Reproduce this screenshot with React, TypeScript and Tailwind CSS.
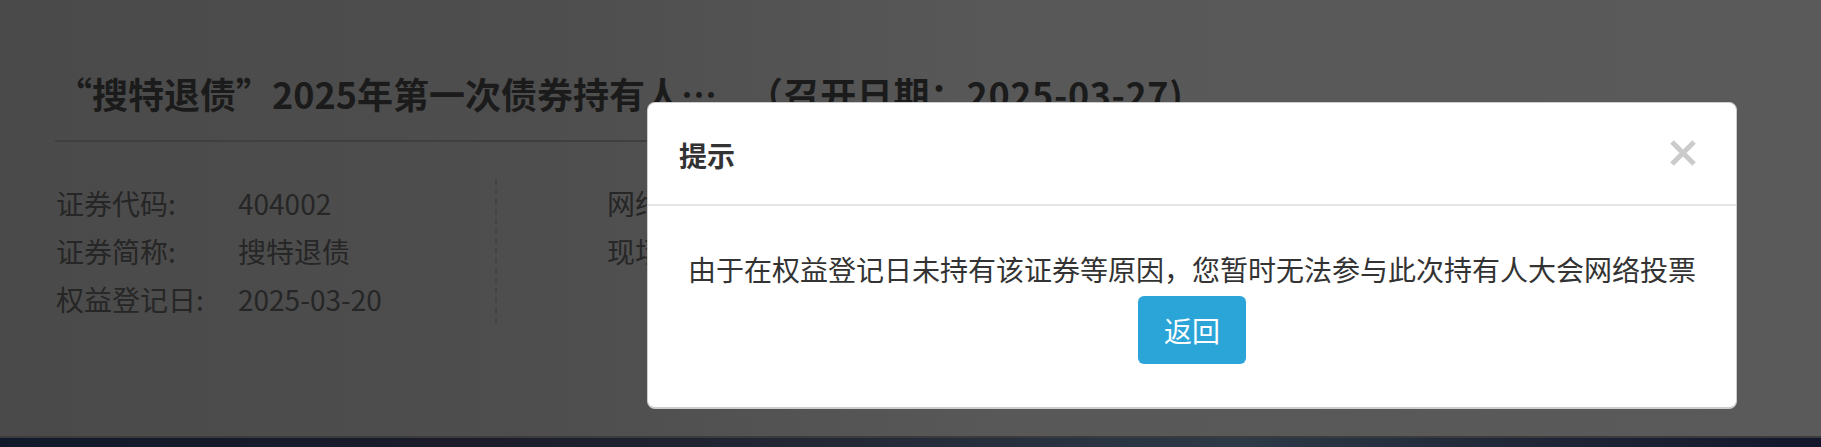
import { useState } from 'react';

const infoLeft = [
  { label: '证券代码:', value: '404002' },
  { label: '证券简称:', value: '搜特退债' },
  { label: '权益登记日:', value: '2025-03-20' },
];

const infoRight = [
  { label: '网络投票时间:', value: '2025-03-27 09:15-15:00' },
  { label: '现场会议时间:', value: '2025-03-27 14:00' },
];

function CloseIcon() {
  return (
    <svg width="26" height="26" viewBox="0 0 26 26" aria-hidden="true">
      <path d="M2 2 L24 24 M24 2 L2 24" stroke="#cbcbcb" strokeWidth="5" />
    </svg>
  );
}

export default function App() {
  const [open, setOpen] = useState(true);

  return (
    <div
      lang="zh-CN"
      className="relative h-[447px] w-full overflow-hidden font-['Noto_Sans_CJK_SC','Noto_Sans',sans-serif]"
    >
      {/* page behind the dimmed backdrop */}
      <main className="h-[436px] bg-[linear-gradient(90deg,#4a4a4a_0%,#4e4e4e_30%,#585858_55%,#5a5a5a_100%)] px-[56px] pt-[67px]">
        <h1 className="flex items-center text-[36px] leading-[52px] font-bold text-[#1b1b1b]">
          <span className="inline-block max-w-[665px] truncate">
            “搜特退债”2025年第一次债券持有人会议
          </span>
          <span className="ml-[26px] whitespace-nowrap tracking-[0.6px]">（召开日期：2025-03-27)</span>
        </h1>
        <div className="mt-[21px] -ml-px h-[2px] w-[1640px] bg-[#3f3f3f]" />

        <div className="mt-[37px] flex text-[28px] leading-[48px] text-[#262626]">
          <div className="w-[441px] border-r-2 border-dashed border-[#444]">
            {infoLeft.map((row) => (
              <div key={row.label} className="flex">
                <span className="w-[182px]">{row.label}</span>
                <span>{row.value}</span>
              </div>
            ))}
          </div>
          <div className="pl-[110px]">
            {infoRight.map((row) => (
              <div key={row.label} className="flex">
                <span className="w-[210px]">{row.label}</span>
                <span>{row.value}</span>
              </div>
            ))}
          </div>
        </div>
      </main>
      <footer className="h-[11px] border-t-2 border-[#3b3b3b] bg-[linear-gradient(90deg,#111a2b_0%,#1b1b2b_25%,#232736_45%,#2d3a48_68%,#1f2536_85%,#13172c_100%)]" />

      {/* modal */}
      {open && (
        <div className="absolute top-[102px] left-[647px] w-[1090px] rounded-[8px] border border-b-2 border-[#cdcdcd] bg-white">
          <div className="flex h-[103px] items-center justify-between border-b-2 border-[#e5e5e5] pt-[3px] pr-[40px] pl-[31px]">
            <h2 className="text-[28px] leading-none font-bold text-[#333]">提示</h2>
            <button type="button" onClick={() => setOpen(false)} className="-mt-[4px]">
              <CloseIcon />
            </button>
          </div>
          <div className="flex flex-col items-center pt-[42px] pb-[43px]">
            <p className="text-[28px] leading-[42px] text-[#333]">
              由于在权益登记日未持有该证券等原因，您暂时无法参与此次持有人大会网络投票
            </p>
            <button
              type="button"
              onClick={() => setOpen(false)}
              className="mt-[6px] h-[68px] w-[108px] rounded-[6px] bg-[#2ba4d8] text-[28px] text-white"
            >
              返回
            </button>
          </div>
        </div>
      )}
    </div>
  );
}
